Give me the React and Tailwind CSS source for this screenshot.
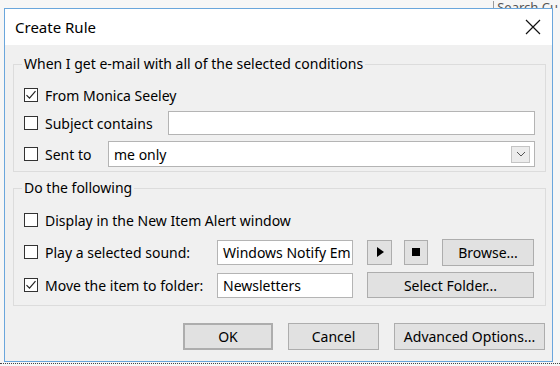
import React from "react";

const font = { fontFamily: '"Noto Sans", "Open Sans", sans-serif' };

const Check = ({ checked }) => (
  <span className="ml-[2px] flex h-[14px] w-[14px] shrink-0 items-center justify-center border border-[#333333] bg-white">
    {checked && (
      <svg width="12" height="12" viewBox="0 0 12 12">
        <path d="M1.5 6.2 L4.5 9.2 L10.5 2.2" fill="none" stroke="#222" strokeWidth="1.2" />
      </svg>
    )}
  </span>
);

const Btn = ({ children, className = "" }) => (
  <button
    className={
      "flex items-center justify-center border border-[#adadad] bg-[#e1e1e1] text-[14px] text-black " +
      className
    }
  >
    {children}
  </button>
);

const Field = ({ children, className = "" }) => (
  <div
    className={
      "flex items-center border border-[#b4b4b4] bg-white px-[5px] text-[14px] text-black " +
      className
    }
  >
    {children}
  </div>
);

const Group = ({ title, children }) => (
  <fieldset className="border border-[#dcdcdc] pl-[8px] pr-[10px]">
    <legend className="px-[2px] text-[14px] leading-[18px] text-black">{title}</legend>
    {children}
  </fieldset>
);

export default function App() {
  return (
    <div className="h-[366px] w-[560px] overflow-hidden bg-[#f6f6f6]" style={font}>
      <div className="flex h-[8px] justify-end overflow-hidden">
        <div className="mr-[2px] mt-[1px] border-l border-[#9a9a9a] pl-[3px] text-[13px] leading-[13px] text-[#555]">
          Search Cu
        </div>
      </div>
      <div className="ml-[4px] flex h-[354px] w-[549px] flex-col border border-[#6aa6dc] bg-[#f0f0f0]">
        <div className="flex h-[36px] items-center justify-between bg-white pl-[10px] pr-[11px]">
          <span className="text-[15px] text-black">Create Rule</span>
          <svg width="16" height="16" viewBox="0 0 16 16">
            <path d="M1 1 L15 15 M15 1 L1 15" stroke="#111" strokeWidth="1.2" />
          </svg>
        </div>

        <div className="flex flex-col pl-[8px] pr-[6px]">
          <div className="mt-[10px]">
            <Group title="When I get e-mail with all of the selected conditions">
              <div className="mt-[9px] flex h-[26px] items-center gap-[7px]">
                <Check checked />
                <span className="text-[14px]">From Monica Seeley</span>
              </div>
              <div className="mt-[3px] flex h-[24px] items-center gap-[7px]">
                <Check />
                <span className="w-[116px] text-[14px]">Subject contains</span>
                <Field className="h-[24px] flex-1" />
              </div>
              <div className="mb-[4px] mt-[6px] flex h-[26px] items-center gap-[7px]">
                <Check />
                <span className="w-[56px] text-[14px]">Sent to</span>
                <Field className="h-[26px] flex-1 justify-between pr-[4px]">
                  <span>me only</span>
                  <span className="flex h-[17px] w-[19px] items-center justify-center border border-[#c4c4c4] bg-[#ececec]">
                    <svg width="10" height="6" viewBox="0 0 10 6">
                      <path d="M1 1 L5 5 L9 1" fill="none" stroke="#555" strokeWidth="1" />
                    </svg>
                  </span>
                </Field>
              </div>
            </Group>
          </div>

          <div className="mt-[7px]">
            <Group title="Do the following">
              <div className="mt-[11px] flex h-[24px] items-center gap-[7px]">
                <Check />
                <span className="text-[14px]">Display in the New Item Alert window</span>
              </div>
              <div className="mt-[7px] flex h-[26px] items-center gap-[7px]">
                <Check />
                <span className="w-[165px] text-[14px]">Play a selected sound:</span>
                <Field className="h-[25px] w-[136px] whitespace-nowrap px-[4px]">Windows Notify Em</Field>
                <div className="ml-[7px] flex items-center gap-[12px]">
                  <Btn className="h-[25px] w-[25px]">
                    <svg width="8" height="10" viewBox="0 0 8 10">
                      <path d="M1 0 L8 5 L1 10 Z" fill="#000" />
                    </svg>
                  </Btn>
                  <Btn className="h-[25px] w-[24px]">
                    <span className="h-[8px] w-[8px] bg-black" />
                  </Btn>
                  <Btn className="ml-[2px] h-[27px] w-[92px]">Browse...</Btn>
                </div>
              </div>
              <div className="mb-[7px] mt-[7px] flex h-[26px] items-center gap-[7px]">
                <Check checked />
                <span className="w-[165px] text-[14px]">Move the item to folder:</span>
                <Field className="h-[25px] w-[136px]">Newsletters</Field>
                <Btn className="ml-[7px] h-[26px] w-[167px]">Select Folder...</Btn>
              </div>
            </Group>
          </div>

          <div className="mr-[1px] mt-[17px] flex justify-end gap-[15px]">
            <Btn className="h-[27px] w-[90px] border-2 border-[#0078d7]">OK</Btn>
            <Btn className="h-[27px] w-[91px]">Cancel</Btn>
            <Btn className="h-[27px] w-[151px]">Advanced Options...</Btn>
          </div>
        </div>
      </div>
      <div className="mt-[1px] h-[1px] border-t border-dotted border-[#444]" />
    </div>
  );
}
